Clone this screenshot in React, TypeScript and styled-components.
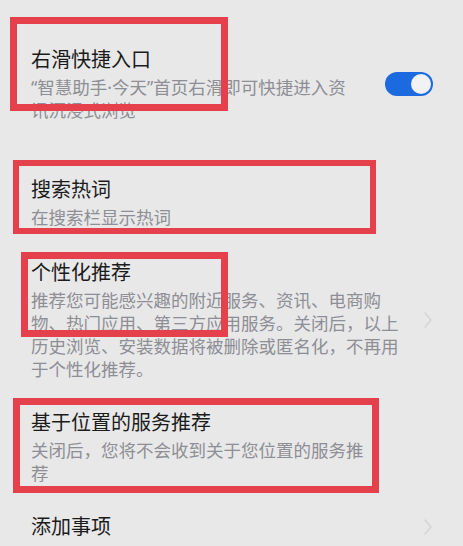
import styled, { createGlobalStyle } from 'styled-components'

const GlobalStyle = createGlobalStyle`
  html, body {
    margin: 0;
    padding: 0;
    background: #e8e8e8;
  }
  body {
    font-family: "Noto Sans", "Noto Sans CJK SC", sans-serif;
  }
`

type Box = { top: number; left: number; width: number; height: number; border: number }

type Item = {
  title: string
  desc?: string
  textWidth?: number
  toggle?: boolean
  chevron?: boolean
  box?: Box
  spaceAfter?: number
}

const items: Item[] = [
  {
    title: '右滑快捷入口',
    desc: '“智慧助手·今天”首页右滑即可快捷进入资讯沉浸式浏览',
    textWidth: 330,
    toggle: true,
    box: { top: -15, left: 10, width: 218, height: 94, border: 7 },
    spaceAfter: 26,
  },
  {
    title: '搜索热词',
    desc: '在搜索栏显示热词',
    box: { top: -2, left: 13, width: 363, height: 74, border: 6 },
    spaceAfter: 2,
  },
  {
    title: '个性化推荐',
    desc: '推荐您可能感兴趣的附近服务、资讯、电商购物、热门应用、第三方应用服务。关闭后，以上历史浏览、安装数据将被删除或匿名化，不再用于个性化推荐。',
    textWidth: 372,
    chevron: true,
    box: { top: 7, left: 21, width: 207, height: 85, border: 7 },
  },
  {
    title: '基于位置的服务推荐',
    desc: '关闭后，您将不会收到关于您位置的服务推荐',
    textWidth: 345,
    box: { top: 3, left: 13, width: 366, height: 95, border: 7 },
  },
  {
    title: '添加事项',
    chevron: true,
  },
]

function Chevron() {
  return (
    <ChevronIcon width="8" height="16" viewBox="0 0 8 16">
      <polyline points="1,1 7,8 1,15" fill="none" stroke="#d5d5d5" strokeWidth="1.6" strokeLinecap="round" strokeLinejoin="round" />
    </ChevronIcon>
  )
}

export default function App() {
  return (
    <>
      <GlobalStyle />
      <List lang="zh-CN">
        {items.map((item) => (
          <Row key={item.title} $spaceAfter={item.spaceAfter ?? 0}>
            <Text $width={item.textWidth}>
              <Title>{item.title}</Title>
              {item.desc && <Desc>{item.desc}</Desc>}
            </Text>
            {item.toggle && (
              <Toggle>
                <Knob />
              </Toggle>
            )}
            {item.chevron && <Chevron />}
            {item.box && (
              <Highlight
                style={{
                  top: item.box.top,
                  left: item.box.left,
                  width: item.box.width,
                  height: item.box.height,
                  borderWidth: item.box.border,
                }}
              />
            )}
          </Row>
        ))}
      </List>
    </>
  )
}

const List = styled.div`
  padding-top: 32px;
  display: flex;
  flex-direction: column;
`
const Row = styled.div<{ $spaceAfter: number }>`
  position: relative;
  display: flex;
  align-items: center;
  justify-content: space-between;
  padding: 14px 30px 14px 31px;
  margin-bottom: ${(p) => p.$spaceAfter}px;
`
const Text = styled.div<{ $width?: number }>`
  width: ${(p) => (p.$width ? `${p.$width}px` : 'auto')};
  display: flex;
  flex-direction: column;
`
const Title = styled.div`
  font-size: 20px;
  line-height: 28px;
  color: #1b1b1b;
`
const Desc = styled.div`
  margin-top: 2px;
  font-size: 17.5px;
  line-height: 23px;
  color: #8e8e95;
  line-break: strict;
`
const Toggle = styled.div`
  width: 48px;
  height: 24px;
  border-radius: 12px;
  background: #1b6ae0;
  padding: 2px;
  box-sizing: border-box;
  display: flex;
  justify-content: flex-end;
  flex-shrink: 0;
`
const Knob = styled.div`
  width: 20px;
  height: 20px;
  border-radius: 50%;
  background: #f2f2f4;
`
const ChevronIcon = styled.svg`
  margin-right: 1px;
  flex-shrink: 0;
`
const Highlight = styled.div`
  position: absolute;
  box-sizing: border-box;
  border-style: solid;
  border-color: #e5414d;
  pointer-events: none;
`
